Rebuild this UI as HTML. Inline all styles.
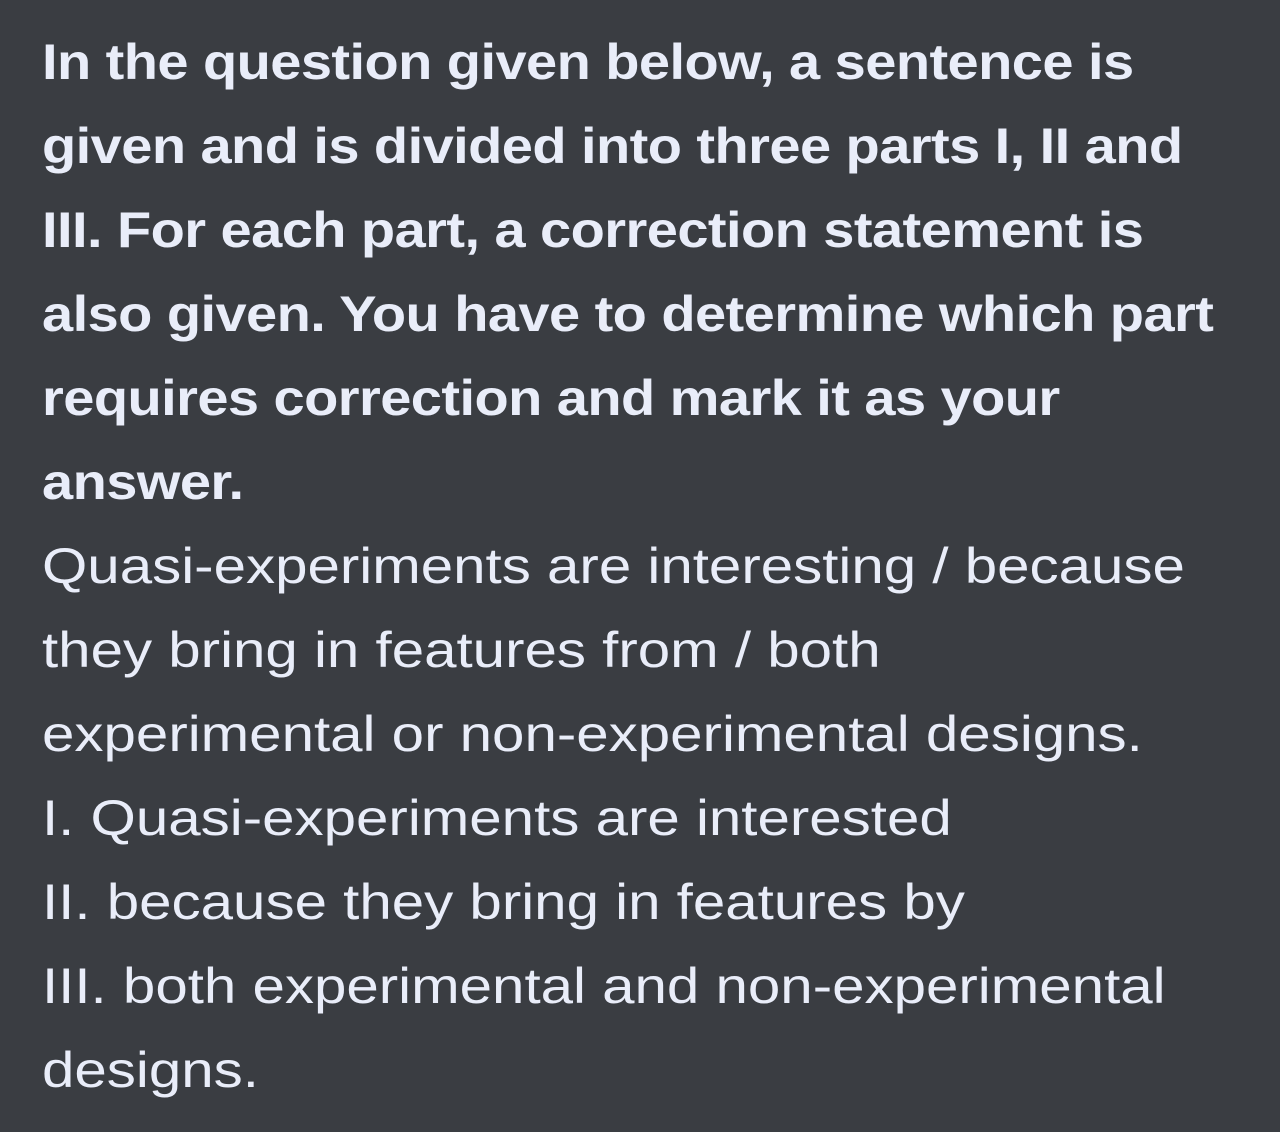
<!DOCTYPE html>
<html><head><meta charset="utf-8"><style>
html,body{margin:0;padding:0;background:#3a3d42;width:1280px;height:1132px;overflow:hidden}
.t{position:absolute;left:42px;color:#e9edf9;font-family:"Liberation Sans",Arial,sans-serif;font-size:50px;line-height:84px;white-space:nowrap;transform-origin:0 0}
.b{top:20px;font-weight:bold;letter-spacing:-0.5px;transform:scaleX(1.12)}
.r{top:524px;transform:scaleX(1.165)}
</style></head><body>
<div class="t b">In the question given below, a sentence is<br>given and is divided into three parts I, II and<br>III. For each part, a correction statement is<br>also given. You have to determine which part<br>requires correction and mark it as your<br>answer.</div>
<div class="t r">Quasi-experiments are interesting / because<br>they bring in features from / both<br>experimental or non-experimental designs.<br>I. Quasi-experiments are interested<br>II. because they bring in features by<br>III. both experimental and non-experimental<br>designs.</div>
</body></html>
